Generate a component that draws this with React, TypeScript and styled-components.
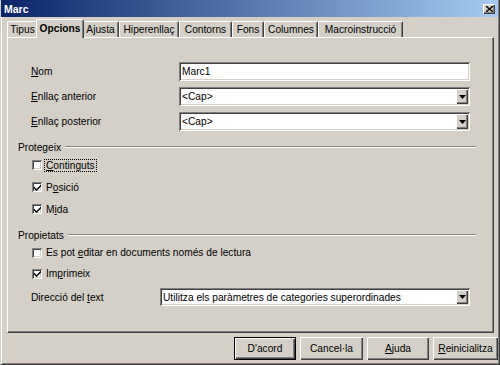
import styled, { createGlobalStyle } from "styled-components";

const GlobalStyle = createGlobalStyle`
  html, body {
    margin: 0;
    padding: 0;
    background: #d4d0c8;
  }
  body {
    font-family: "Liberation Sans", Arial, sans-serif;
    font-size: 10.2px;
    color: #000;
  }
`;

const Window = styled.div`
  width: 500px;
  height: 365px;
  box-sizing: border-box;
  background: #d4d0c8;
  border-left: 1px solid #d4d0c8;
  border-right: 1px solid #404040;
  border-bottom: 1px solid #404040;
  box-shadow: inset 1px 0 #fff, inset -1px -1px #808080;
  display: flex;
  flex-direction: column;
`;

const TitleBar = styled.div`
  height: 17px;
  margin: 0 1px 0 0;
  display: flex;
  align-items: center;
  justify-content: space-between;
  padding: 0 3px 0 3px;
  background: linear-gradient(to right, #0a246a, #a6caf0);
  color: #fff;
  font-weight: bold;
  font-size: 10.5px;
`;

const CloseButton = styled.div`
  width: 12px;
  height: 10px;
  display: flex;
  align-items: center;
  justify-content: center;
  background: #d4d0c8;
  box-shadow: inset 1px 1px #fff, inset -1px -1px #404040, inset -2px -2px #808080;
`;

const Body = styled.div`
  padding: 2px 0 0 6px;
`;

const TabStrip = styled.div`
  display: flex;
  height: 18px;
  align-items: flex-end;
  position: relative;
  z-index: 1;
`;

const Tab = styled.div<{ $w: number; $active?: boolean }>`
  box-sizing: border-box;
  width: ${(p) => p.$w}px;
  height: ${(p) => (p.$active ? 19 : 16)}px;
  margin: ${(p) => (p.$active ? "0 -2px -1px -2px" : "0")};
  ${(p) => (p.$active ? "padding-bottom: 2px;" : "")}
  display: flex;
  align-items: center;
  justify-content: center;
  background: #d4d0c8;
  border-top: 1px solid #fff;
  border-left: 1px solid #fff;
  border-right: 1px solid #404040;
  box-shadow: inset -1px 0 #808080;
  border-radius: 2px 2px 0 0;
  font-weight: ${(p) => (p.$active ? "bold" : "normal")};
  white-space: nowrap;
  position: relative;
  z-index: ${(p) => (p.$active ? 2 : 1)};
`;

const Panel = styled.div`
  box-sizing: border-box;
  width: 487px;
  height: 296px;
  border-top: 1px solid #fff;
  border-left: 1px solid #fff;
  border-right: 1px solid #404040;
  border-bottom: 1px solid #404040;
  box-shadow: inset -1px -1px #808080;
  padding: 24px 23px 0 10px;
  display: flex;
  flex-direction: column;
`;

const Form = styled.div`
  display: grid;
  grid-template-columns: 148px 1fr;
  row-gap: 6px;
  padding-left: 13px;
  align-items: center;
`;

const Label = styled.div`
  white-space: nowrap;
`;

const Sunken = styled.div<{ $h: number }>`
  box-sizing: border-box;
  height: ${(p) => p.$h}px;
  background: #fff;
  box-shadow: inset 1px 1px #808080, inset -1px -1px #fff, inset 2px 2px #404040,
    inset -2px -2px #d4d0c8;
  display: flex;
  align-items: center;
  padding: 2px 2px 2px 3px;
  white-space: nowrap;
`;

const ComboText = styled.div`
  flex: 1;
`;

const ArrowButton = styled.div`
  width: 12px;
  height: 100%;
  display: flex;
  align-items: center;
  justify-content: center;
  background: #d4d0c8;
  box-shadow: inset 1px 1px #fff, inset -1px -1px #404040, inset -2px -2px #808080;
`;

const SectionHeader = styled.div<{ $mt: number }>`
  display: flex;
  align-items: center;
  height: 14px;
  margin-top: ${(p) => p.$mt}px;
  margin-right: -6px;
  gap: 4px;
  &::after {
    content: "";
    flex: 1;
    height: 0;
    border-top: 1px solid #808080;
    border-bottom: 1px solid #fff;
  }
`;

const CheckRow = styled.div<{ $h: number }>`
  display: flex;
  align-items: center;
  height: ${(p) => p.$h}px;
  padding-left: 14px;
  gap: 3px;
  white-space: nowrap;
`;

const Box = styled.div`
  box-sizing: border-box;
  width: 10px;
  height: 10px;
  background: #fff;
  box-shadow: inset 1px 1px #808080, inset -1px -1px #fff, inset 2px 2px #404040,
    inset -2px -2px #d4d0c8;
  display: flex;
  align-items: center;
  justify-content: center;
`;

const CheckText = styled.span<{ $focus?: boolean }>`
  padding: 0 1px;
  outline: ${(p) => (p.$focus ? "1px dotted #000" : "none")};
`;

const DirRow = styled.div`
  display: grid;
  grid-template-columns: 129px 1fr;
  align-items: center;
  padding-left: 13px;
  margin-top: 4px;
`;

const Footer = styled.div`
  display: flex;
  justify-content: flex-end;
  gap: 4px;
  margin-top: 4px;
  padding-right: 1px;
`;

const Button = styled.div<{ $w: number; $default?: boolean }>`
  box-sizing: border-box;
  width: ${(p) => p.$w}px;
  height: 23px;
  display: flex;
  align-items: center;
  justify-content: center;
  background: #d4d0c8;
  box-shadow: inset 1px 1px #fff, inset -1px -1px #404040, inset -2px -2px #808080;
  border: ${(p) => (p.$default ? "1px solid #000" : "none")};
`;

const U = styled.span`
  text-decoration: underline;
`;

const Arrow = () => (
  <svg width="7" height="4" viewBox="0 0 7 4">
    <path d="M0 0h7L3.5 4z" fill="#000" />
  </svg>
);

const Tick = () => (
  <svg width="7" height="7" viewBox="0 0 7 7">
    <path d="M0 2.5l2.5 2.5L7 0.5v2L2.5 7 0 4.5z" fill="#000" />
  </svg>
);

function Combo({ h, text }: { h: number; text: string }) {
  return (
    <Sunken $h={h}>
      <ComboText>{text}</ComboText>
      <ArrowButton>
        <Arrow />
      </ArrowButton>
    </Sunken>
  );
}

const tabs: [string, number][] = [
  ["Tipus", 31],
  ["Opcions", 48],
  ["Ajusta", 37],
  ["Hiperenllaç", 60],
  ["Contorns", 53],
  ["Fons", 32],
  ["Columnes", 54],
  ["Macroinstrucció", 85],
];

function App() {
  return (
    <>
      <GlobalStyle />
      <Window>
        <TitleBar>
          <span>Marc</span>
          <CloseButton>
            <svg width="7" height="6" viewBox="0 0 7 6">
              <path d="M0 0l7 6M7 0L0 6" stroke="#000" strokeWidth="1.4" />
            </svg>
          </CloseButton>
        </TitleBar>
        <Body>
          <TabStrip>
            {tabs.map(([t, w]) =>
              t === "Ajusta" ? (
                <Tab key={t} $w={w}>
                  A<U>j</U>usta
                </Tab>
              ) : (
                <Tab key={t} $w={w} $active={t === "Opcions"}>
                  {t}
                </Tab>
              )
            )}
          </TabStrip>
          <Panel>
            <Form>
              <Label>
                <U>N</U>om
              </Label>
              <Sunken $h={19}>Marc1</Sunken>
              <Label>
                <U>E</U>nllaç anterior
              </Label>
              <Combo h={19} text="<Cap>" />
              <Label>
                <U>E</U>nllaç posterior
              </Label>
              <Combo h={19} text="<Cap>" />
            </Form>
            <SectionHeader $mt={9}>Protegeix</SectionHeader>
            <CheckRow $h={22}>
              <Box />
              <CheckText $focus>
                <U>C</U>ontinguts
              </CheckText>
            </CheckRow>
            <CheckRow $h={22}>
              <Box>
                <Tick />
              </Box>
              <CheckText>
                P<U>o</U>sició
              </CheckText>
            </CheckRow>
            <CheckRow $h={22}>
              <Box>
                <Tick />
              </Box>
              <CheckText>
                M<U>i</U>da
              </CheckText>
            </CheckRow>
            <SectionHeader $mt={8}>Propietats</SectionHeader>
            <CheckRow $h={21}>
              <Box />
              <CheckText>
                Es pot <U>e</U>ditar en documents només de lectura
              </CheckText>
            </CheckRow>
            <CheckRow $h={21}>
              <Box>
                <Tick />
              </Box>
              <CheckText>
                Im<U>p</U>rimeix
              </CheckText>
            </CheckRow>
            <DirRow>
              <Label>
                Direcció del <U>t</U>ext
              </Label>
              <Combo h={18} text="Utilitza els paràmetres de categories superordinades" />
            </DirRow>
          </Panel>
        </Body>
        <Footer>
          <Button $w={62} $default>
            D'acord
          </Button>
          <Button $w={63}>Cancel·la</Button>
          <Button $w={62}>
            <U>A</U>juda
          </Button>
          <Button $w={65}>
            <U>R</U>einicialitza
          </Button>
        </Footer>
      </Window>
    </>
  );
}

export default App;
